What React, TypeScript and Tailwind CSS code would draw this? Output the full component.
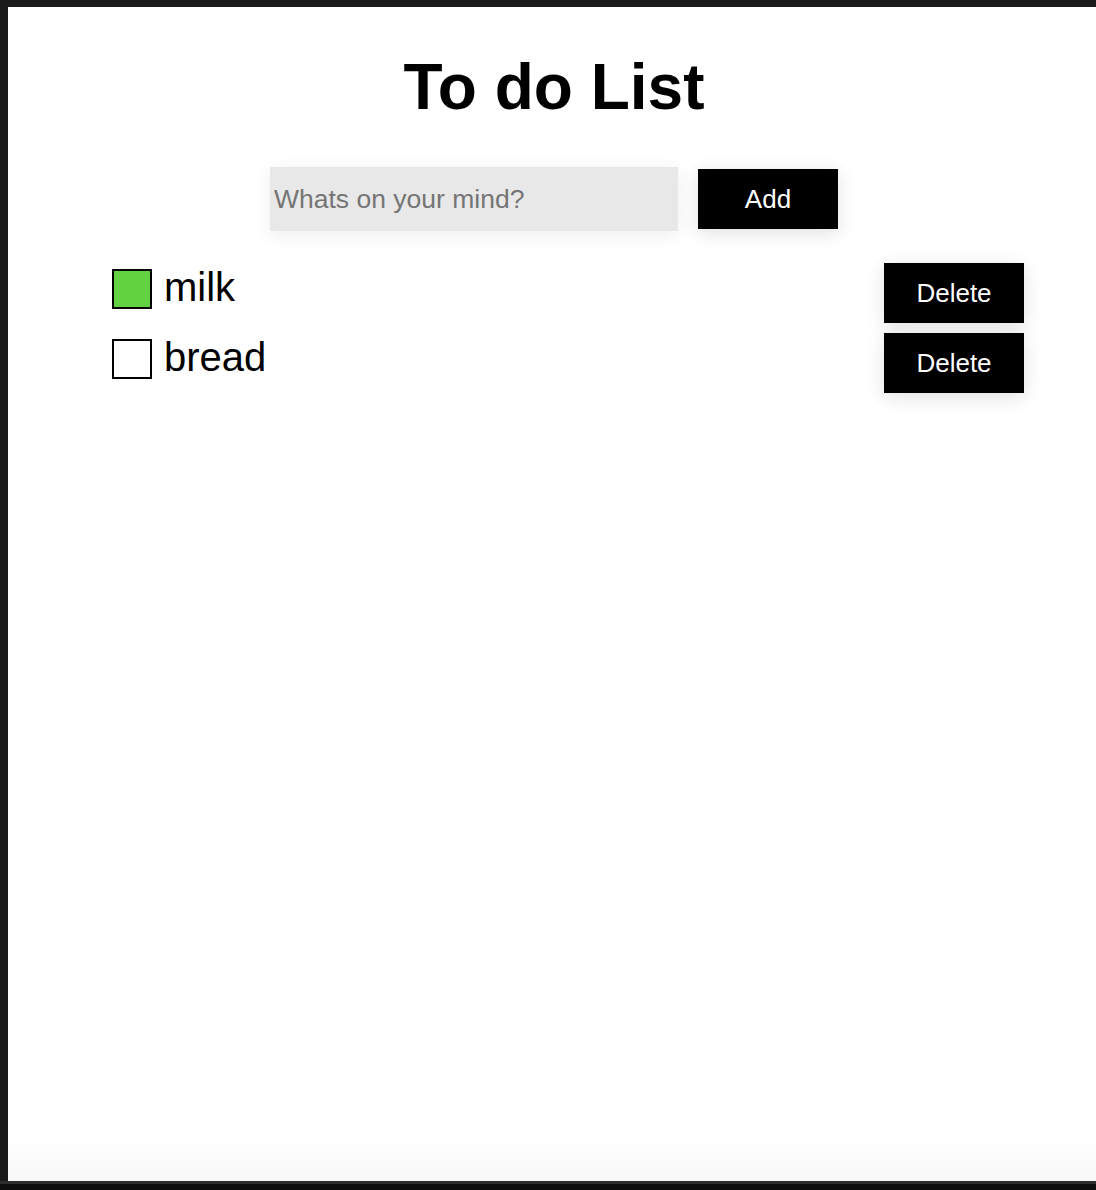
import { useState } from "react";

interface Todo {
  id: number;
  text: string;
  done: boolean;
}

export default function App() {
  const [todos, setTodos] = useState<Todo[]>([
    { id: 1, text: "milk", done: true },
    { id: 2, text: "bread", done: false },
  ]);
  const [draft, setDraft] = useState("");

  const addTodo = () => {
    const text = draft.trim();
    if (!text) return;
    setTodos((t) => [...t, { id: Date.now(), text, done: false }]);
    setDraft("");
  };

  const toggle = (id: number) =>
    setTodos((t) => t.map((x) => (x.id === id ? { ...x, done: !x.done } : x)));

  const remove = (id: number) => setTodos((t) => t.filter((x) => x.id !== id));

  return (
    <div className="h-[1190px] w-[1096px] overflow-hidden bg-[#0e0e0e] font-['Liberation_Sans',Arial,sans-serif]">
      <div className="bg-[#1a1a1a] pt-[7px] pl-[8px] border-b-[3px] border-[#2e2e2e]">
        <main className="h-[1174px] bg-[linear-gradient(to_bottom,#ffffff_96%,#f8f8f8)] pt-[48px]">
          {/* title + input row, centred a touch right */}
          <div className="pl-[4px]">
            <h1 className="text-center text-[64px] font-bold leading-none text-black">
              To do List
            </h1>
            <div className="mt-[48px] flex items-center justify-center gap-[20px]">
              <input
                value={draft}
                onChange={(e) => setDraft(e.target.value)}
                onKeyDown={(e) => e.key === "Enter" && addTodo()}
                placeholder="Whats on your mind?"
                className="h-[64px] w-[408px] bg-[#e8e8e8] px-[4px] text-[26.5px] text-black outline-none placeholder:text-[#757575] shadow-[0_4px_18px_rgba(0,0,0,0.07)]"
              />
              <button
                onClick={addTodo}
                className="h-[60px] w-[140px] bg-black text-[26px] text-white shadow-[0_4px_18px_rgba(0,0,0,0.12)]"
              >
                Add
              </button>
            </div>
          </div>

          {/* list */}
          <ul className="mt-[32px] flex flex-col gap-[10px] pl-[104px] pr-[72px]">
            {todos.map((todo) => (
              <li key={todo.id} className="flex items-start justify-between">
                <div className="mt-[4px] flex items-center gap-[12px]">
                  <button
                    onClick={() => toggle(todo.id)}
                    className={
                      todo.done
                        ? "h-[40px] w-[40px] border-2 border-black bg-[#62d242]"
                        : "h-[40px] w-[40px] border-2 border-black bg-white"
                    }
                  />
                  <span className="-mt-[3px] text-[40px] leading-[46px] text-black">{todo.text}</span>
                </div>
                <button
                  onClick={() => remove(todo.id)}
                  className="h-[60px] w-[140px] bg-black text-[26px] text-white shadow-[0_4px_18px_rgba(0,0,0,0.12)]"
                >
                  Delete
                </button>
              </li>
            ))}
          </ul>
        </main>
      </div>
    </div>
  );
}
